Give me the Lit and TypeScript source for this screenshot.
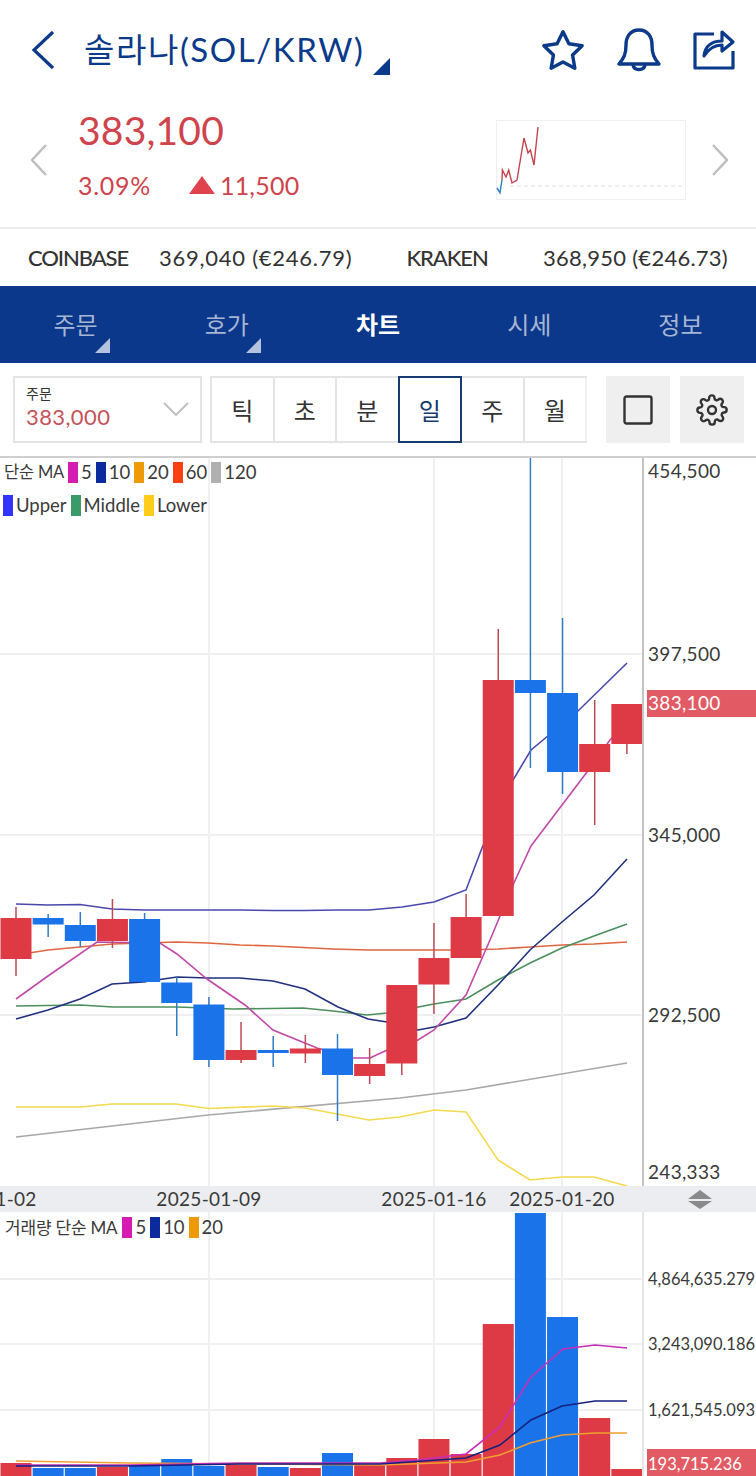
import { LitElement, css, html, svg } from "lit";
import { customElement } from "lit/decorators.js";

const RED = "#de3a45";
const BLUE = "#1a73e8";

// up, open/top, bottom, wick top, wick bottom (page y)
const candles: [boolean, number, number, number, number][] = [
  [true, 918, 959, 907, 976],
  [false, 918, 924.5, 914, 937],
  [false, 925, 941, 912, 947],
  [true, 919, 941, 899, 948],
  [false, 919, 982, 913, 983],
  [false, 982.5, 1003, 977, 1036],
  [false, 1004.5, 1060, 997, 1067],
  [true, 1050, 1060, 1022, 1063],
  [false, 1050, 1053, 1036, 1067],
  [true, 1048.5, 1053.5, 1035, 1063],
  [false, 1048.5, 1075, 1034, 1121],
  [true, 1064, 1076, 1048, 1084],
  [true, 985, 1063.5, 985, 1075],
  [true, 958, 984.5, 923, 1014],
  [true, 917, 958, 894, 958],
  [true, 680, 916, 629, 916],
  [false, 680, 693, 458, 768],
  [false, 693, 772, 618, 794],
  [true, 744, 772, 700, 825],
  [true, 704, 744, 704, 754],
];

const volumeTops = [
  1463, 1468, 1468, 1467, 1465, 1459, 1466, 1465, 1467, 1468, 1453, 1465, 1458, 1439, 1454, 1324, 1213, 1317,
  1418, 1469,
];

const priceLines: { color: string; pts: string }[] = [
  {
    color: "#a8a8a8",
    pts: "16,1137 208,1115 400,1098 466,1090 627,1063",
  },
  {
    color: "#f5d94e",
    pts: "16,1107 80,1107 112,1104 176,1104 209,1108.5 273,1106 305,1108 369,1120 400,1117 434,1110 466,1112 498,1160 530,1180 562,1177 594,1177 627,1186",
  },
  {
    color: "#e0663f",
    pts: "16,955 48,950 80,947 112,944 177,942 208,943 240,945 273,946 333,949 368,950 402,950 434,950 466,950 498,949 530,947 562,945 594,944 627,942",
  },
  {
    color: "#4c8f5e",
    pts: "16,1006 80,1005 113,1007 177,1007 233,1009 303,1008 333,1011 367,1015 387,1013 434,1004 466,999 498,980 530,963 562,948 594,936 627,924",
  },
  {
    color: "#20307f",
    pts: "16,1019 48,1010 80,999 112,984 143,982 177,977 208,978 240,978 273,981 305,989 338,1007 368,1019 387,1022 418,1030 434,1027 466,1018 498,985 530,950 562,922 594,895 627,859",
  },
  {
    color: "#c04aa8",
    pts: "16,999 48,976 97,942 160,943 177,954 207,979 245,1005 273,1030 317,1048 353,1058 370,1058 385,1051 418,1040 434,1030 466,995 490,940 513,885 531,846 587,772 610,740 627,722",
  },
  {
    color: "#4a48ad",
    pts: "16,904 48,905 80,904.5 112,909 144,910 176,910 209,910 241,910 273,910.5 305,910.5 337,910 369,910 402,907 434,902 466,890 482,848 513,780 531,750 578,711 627,663",
  },
];

const volumeLines: { color: string; pts: string }[] = [
  { color: "#f0a030", pts: "16,1461 130,1463 380,1465 466,1462 500,1455 530,1443 562,1435 595,1433 627,1433" },
  { color: "#c92cb8", pts: "16,1465 130,1465 240,1463 380,1463 418,1460 466,1454 500,1427 531,1377 563,1349 595,1345 627,1348" },
  { color: "#15207f", pts: "16,1466 130,1466 240,1464 380,1464 466,1458 500,1445 531,1420 562,1406 595,1401 627,1401" },
];

const priceAxis: [string, number][] = [
  ["454,500", 471],
  ["397,500", 654],
  ["345,000", 835],
  ["292,500", 1015],
  ["243,333", 1172],
];

const volumeAxis: [string, number][] = [
  ["4,864,635.279", 1279],
  ["3,243,090.186", 1344],
  ["1,621,545.093", 1410],
];

const centerX = (i: number) => 16 + i * 32.15;

@customElement("app-root")
export class AppRoot extends LitElement {
  static styles = css`
    :host {
      display: block;
      width: 756px;
      height: 1476px;
      overflow: hidden;
      background: #fff;
      font-family: "Lato", "Noto Sans CJK KR", sans-serif;
      color: #333;
    }

    .head {
      height: 100px;
      display: flex;
      align-items: center;
      padding: 0 20px 0 31px;
      box-sizing: border-box;
      color: #0b3a8a;
    }
    .title {
      font-size: 33px;
      margin-left: 29px;
      letter-spacing: 1.6px;
      line-height: 40px;
      margin-top: -3px;
    }
    .title-arrow {
      width: 0;
      height: 0;
      border-left: 17px solid transparent;
      border-bottom: 17px solid #0b3a8a;
      margin: 32px 0 0 9px;
    }
    .head-icons {
      margin-left: auto;
      display: flex;
      align-items: center;
      gap: 31px;
    }

    .quote {
      height: 129px;
      display: flex;
      align-items: center;
      padding: 0 28px 7px 31px;
      box-sizing: border-box;
      border-bottom: 2px solid #ececec;
    }
    .quote-main {
      margin: 0 0 14px 31px;
      color: #cf444c;
    }
    .price {
      font-size: 39px;
      line-height: 54px;
      letter-spacing: 0.2px;
    }
    .change {
      display: flex;
      align-items: center;
      font-size: 25px;
      line-height: 36px;
      margin-top: 10px;
      letter-spacing: 0.7px;
    }
    .change span:last-child {
      letter-spacing: 0.2px;
    }
    .up {
      width: 0;
      height: 0;
      border-left: 13px solid transparent;
      border-right: 13px solid transparent;
      border-bottom: 18px solid #e0434d;
      margin: 0 5px 0 38px;
    }
    .spark {
      margin-left: auto;
      margin-right: 26px;
      width: 190px;
      height: 80px;
    }

    .ticker {
      height: 57px;
      display: flex;
      align-items: center;
      padding: 0 28px;
      font-size: 22px;
      box-sizing: border-box;
    }
    .ticker b {
      font-weight: 500;
      letter-spacing: -1.1px;
    }
    .ticker .v1 {
      margin-left: 31px;
      letter-spacing: 0.75px;
    }
    .ticker .k {
      margin-left: 54px;
    }
    .ticker .v2 {
      margin-left: auto;
      letter-spacing: 0.25px;
    }

    .nav {
      height: 77px;
      background: #0b388a;
      display: flex;
    }
    .nav div {
      flex: 1;
      position: relative;
      display: flex;
      align-items: center;
      justify-content: center;
      font-size: 24px;
      color: #a7b5d4;
      padding-bottom: 2px;
      box-sizing: border-box;
    }
    .nav .on {
      color: #fff;
      font-weight: 700;
    }
    .nav i {
      position: absolute;
      left: 95px;
      top: 52px;
      width: 0;
      height: 0;
      border-left: 15px solid transparent;
      border-bottom: 15px solid #b4c2de;
    }

    .tools {
      height: 95px;
      display: flex;
      align-items: center;
      padding: 0 12px 0 13px;
      box-sizing: border-box;
      border-bottom: 2px solid #cfcfcf;
    }
    .select {
      width: 189px;
      height: 67px;
      box-sizing: border-box;
      border: 2px solid #e4e4e4;
      padding: 8px 0 0 11px;
      position: relative;
      flex: none;
    }
    .select small {
      display: block;
      font-size: 14px;
      line-height: 16px;
    }
    .select span {
      display: block;
      font-size: 22px;
      line-height: 30px;
      color: #c7525a;
      letter-spacing: 0.4px;
    }
    .select svg {
      position: absolute;
      right: 11px;
      top: 24px;
    }
    .seg {
      margin-left: 8px;
      display: flex;
      border: 2px solid #e4e4e4;
      border-right: none;
      height: 67px;
      box-sizing: border-box;
    }
    .seg div {
      width: 62.5px;
      box-sizing: border-box;
      display: flex;
      align-items: center;
      justify-content: center;
      font-size: 24px;
      border-right: 2px solid #e4e4e4;
    }
    .seg .on {
      border: 2px solid #163b70;
      margin: -2px 0 -2px -2px;
      color: #163b70;
      height: 67px;
      width: 64.5px;
    }
    .seg div:last-child {
      border-right-color: #f1f1f1;
    }
    .btn {
      width: 64px;
      height: 67px;
      background: #efefef;
      display: flex;
      align-items: center;
      justify-content: center;
      flex: none;
    }
    .btn.first {
      margin-left: auto;
      margin-right: 10px;
    }

    .pane {
      position: relative;
      display: block;
    }
    .pane svg {
      display: block;
    }
    .legend {
      position: absolute;
      left: 4px;
      display: flex;
      align-items: center;
      font-size: 18.5px;
      line-height: 21px;
      gap: 3px;
      white-space: nowrap;
      color: #3a3a3a;
    }
    .legend em {
      width: 10px;
      height: 21px;
      flex: none;
    }
    .legend span {
      margin-right: 1px;
    }
    .legend .name {
      font-size: 16.5px;
      letter-spacing: -0.2px;
    }
    .l1 {
      top: 4px;
    }
    .l2 {
      top: 37px;
      left: 3px;
    }
    .l3 {
      top: 5px;
      left: 5px;
    }
    .l3 .name {
      font-size: 17px;
      margin-right: 2px;
    }
    .axis {
      font-size: 19px;
      fill: #3a3a3a;
      font-family: "Lato", "Noto Sans CJK KR", sans-serif;
      letter-spacing: 0.3px;
    }
    .axis.small {
      font-size: 16.5px;
      letter-spacing: 0;
    }
    .axis.light {
      fill: #fff;
    }

    .dates {
      height: 26px;
      background: #ecedf0;
      position: relative;
      overflow: hidden;
    }
    .date {
      position: absolute;
      top: 0;
      width: 120px;
      text-align: center;
      font-size: 19px;
      line-height: 25px;
      letter-spacing: 0.3px;
      color: #3a3a3a;
    }
    .dates svg {
      position: absolute;
      left: 688px;
      top: 4px;
    }
  `;

  private chevron(dir: "l" | "r") {
    const d = dir === "l" ? "M15 1 L1 16 L15 31" : "M1 1 L15 16 L1 31";
    return html`<svg width="16" height="32" viewBox="0 0 16 32" fill="none" stroke="#bdbdbd" stroke-width="2.4">
      <path d=${d}></path>
    </svg>`;
  }

  private grid(y1: number, y2: number, rows: number[]) {
    return svg`
      ${rows.map((y) => svg`<line x1="0" x2="643" y1=${y} y2=${y} stroke="#f0f0f0" stroke-width="2"></line>`)}
      ${[209, 434, 562].map((x) => svg`<line x1=${x} x2=${x} y1=${y1} y2=${y2} stroke="#f0f0f0" stroke-width="2"></line>`)}
    `;
  }

  private priceChart() {
    return html`<svg width="756" height="728" viewBox="0 458 756 728">
      ${this.grid(458, 1186, [654, 835, 1015])}
      ${priceLines.map(
        (l) => svg`<polyline points=${l.pts} fill="none" stroke=${l.color} stroke-width="1.6"></polyline>`,
      )}
      ${candles.map(([up, top, bottom, wTop, wBottom], i) => {
        const x = centerX(i);
        return svg`
          <line x1=${x} x2=${x} y1=${wTop} y2=${wBottom} stroke=${up ? "#bb4a52" : "#2f7cc4"} stroke-width="1.5"></line>
          <rect x=${x - 15.5} y=${top} width="31" height=${bottom - top} fill=${up ? RED : BLUE}></rect>
        `;
      })}
      <line x1="643" x2="643" y1="458" y2="1186" stroke="#c4c4c4" stroke-width="2"></line>
      ${priceAxis.map(([t, y]) => svg`<text class="axis" x="648" y=${y + 7}>${t}</text>`)}
      <rect x="647" y="690" width="109" height="27" fill="#e25a63"></rect>
      <text class="axis light" x="648" y="710">383,100</text>
    </svg>`;
  }

  private volumeChart() {
    return html`<svg width="756" height="264" viewBox="0 1212 756 264">
      ${this.grid(1212, 1476, [1279, 1344, 1410])}
      ${volumeTops.map((top, i) => {
        const up = candles[i][0];
        return svg`<rect x=${centerX(i) - 15.5} y=${top} width="31" height=${1476 - top} fill=${up ? RED : BLUE}></rect>`;
      })}
      ${volumeLines.map(
        (l) => svg`<polyline points=${l.pts} fill="none" stroke=${l.color} stroke-width="1.6"></polyline>`,
      )}
      <line x1="643" x2="643" y1="1212" y2="1476" stroke="#e6e6e6" stroke-width="2"></line>
      ${volumeAxis.map(([t, y]) => svg`<text class="axis small" x="648" y=${y + 6}>${t}</text>`)}
      <rect x="647" y="1449" width="109" height="27" fill="#e25a63"></rect>
      <text class="axis small light" x="648" y="1470">193,715.236</text>
    </svg>`;
  }

  render() {
    return html`
      <div class="head">
        <svg width="24" height="40" viewBox="0 0 24 40" fill="none" stroke="#0b3a8a" stroke-width="3.2">
          <path d="M22 2 L3 20 L22 38"></path>
        </svg>
        <div class="title">솔라나(SOL/KRW)</div>
        <div class="title-arrow"></div>
        <div class="head-icons">
          <svg width="46" height="44" viewBox="0 0 24 23" fill="none" stroke="#0b3a8a" stroke-width="1.8" stroke-linejoin="round">
            <path d="M12 2l3.09 6.26L22 9.27l-5 4.87 1.18 6.88L12 17.77l-6.18 3.25L7 14.14 2 9.27l6.91-1.01z"></path>
          </svg>
          <svg width="44" height="44" viewBox="0 0 44 44" fill="none" stroke="#0b3a8a" stroke-width="3.4" stroke-linejoin="round">
            <path d="M22 2C13 2 9 9 9 17c0 9-2 13-7 19h40c-5-6-7-10-7-19 0-8-4-15-13-15z"></path>
            <path d="M16 37c1 6 11 6 12 0"></path>
          </svg>
          <svg width="44" height="42" viewBox="0 0 44 42" fill="none" stroke="#0b3a8a" stroke-width="3.2" stroke-linejoin="round">
            <path d="M22 5H3v34h38V22"></path>
            <path d="M12 27c1-10 8-15 18-15V3l11 10-11 9v-6c-7 0-13 3-18 11z"></path>
          </svg>
        </div>
      </div>

      <div class="quote">
        ${this.chevron("l")}
        <div class="quote-main">
          <div class="price">383,100</div>
          <div class="change">3.09%<span class="up"></span><span>11,500</span></div>
        </div>
        <svg class="spark" viewBox="496 120 190 80">
          <rect x="496.5" y="120.5" width="189" height="79" fill="#fff" stroke="#efefef"></rect>
          <line x1="510" x2="684" y1="186" y2="186" stroke="#dcdcdc" stroke-dasharray="4 3"></line>
          <polyline points="497,188 500,192.7 502,180" fill="none" stroke="#2f7cc4" stroke-width="1.4"></polyline>
          <polyline
            points="502,180 502.4,170 506,177 508.7,170 512,183 517,180 524,138 528,153 530.4,150 534,165 538,127"
            fill="none"
            stroke="#c4444e"
            stroke-width="1.4"
          ></polyline>
        </svg>
        ${this.chevron("r")}
      </div>

      <div class="ticker">
        <b>COINBASE</b><span class="v1">369,040 (€246.79)</span><b class="k">KRAKEN</b
        ><span class="v2">368,950 (€246.73)</span>
      </div>

      <div class="nav">
        <div>주문<i></i></div>
        <div>호가<i></i></div>
        <div class="on">차트</div>
        <div>시세</div>
        <div>정보</div>
      </div>

      <div class="tools">
        <div class="select">
          <small>주문</small>
          <span>383,000</span>
          <svg width="26" height="14" viewBox="0 0 26 14" fill="none" stroke="#bdbdbd" stroke-width="1.8">
            <path d="M1 1 L13 13 L25 1"></path>
          </svg>
        </div>
        <div class="seg">
          <div>틱</div>
          <div>초</div>
          <div>분</div>
          <div class="on">일</div>
          <div>주</div>
          <div>월</div>
        </div>
        <div class="btn first">
          <svg width="30" height="30" viewBox="0 0 30 30" fill="none" stroke="#333" stroke-width="2.4">
            <rect x="1.5" y="1.5" width="27" height="27" rx="2"></rect>
          </svg>
        </div>
        <div class="btn">
          <svg width="32" height="32" viewBox="0 0 24 24" fill="none" stroke="#333" stroke-width="1.8" stroke-linejoin="round">
            <circle cx="12" cy="12" r="3"></circle>
            <path
              d="M19.4 15a1.65 1.65 0 0 0 .33 1.82l.06.06a2 2 0 1 1-2.83 2.83l-.06-.06a1.65 1.65 0 0 0-2.82 1.17V21a2 2 0 0 1-4 0v-.09a1.65 1.65 0 0 0-2.82-1.12l-.06.06a2 2 0 1 1-2.83-2.83l.06-.06a1.65 1.65 0 0 0-1.17-2.82H3a2 2 0 0 1 0-4h.09a1.65 1.65 0 0 0 1.12-2.82l-.06-.06a2 2 0 1 1 2.83-2.83l.06.06a1.65 1.65 0 0 0 2.82-1.17V3a2 2 0 0 1 4 0v.09a1.65 1.65 0 0 0 2.82 1.12l.06-.06a2 2 0 1 1 2.83 2.83l-.06.06a1.65 1.65 0 0 0 1.17 2.82H21a2 2 0 0 1 0 4h-.09a1.65 1.65 0 0 0-1.51 1z"
            ></path>
          </svg>
        </div>
      </div>

      <div class="pane">
        ${this.priceChart()}
        <div class="legend l1">
          <span class="name">단순 MA</span><em style="background:#d61bb0"></em><span>5</span
          ><em style="background:#0a2a9e"></em><span>10</span><em style="background:#ee9a06"></em><span>20</span
          ><em style="background:#fa4010"></em><span>60</span><em style="background:#b0b0b0"></em><span>120</span>
        </div>
        <div class="legend l2">
          <em style="background:#3333ff"></em><span>Upper</span><em style="background:#3a9a68"></em><span>Middle</span
          ><em style="background:#ffcc1a"></em><span>Lower</span>
        </div>
      </div>

      <div class="dates">
        <div class="date" style="left:${-16 - 60}px">2025-01-02</div>
        <div class="date" style="left:${209 - 60}px">2025-01-09</div>
        <div class="date" style="left:${434 - 60}px">2025-01-16</div>
        <div class="date" style="left:${562 - 60}px">2025-01-20</div>
        <svg width="24" height="19" viewBox="0 0 24 19">
          <path d="M12 0 L24 9 H0 Z" fill="#8a8a8a"></path>
          <path d="M0 11 H24 L12 19 Z" fill="#8a8a8a"></path>
        </svg>
      </div>

      <div class="pane">
        ${this.volumeChart()}
        <div class="legend l3">
          <span class="name">거래량 단순 MA</span><em style="background:#d61bb0"></em><span>5</span
          ><em style="background:#0a2a9e"></em><span>10</span><em style="background:#ee9a06"></em><span>20</span>
        </div>
      </div>
    `;
  }
}
